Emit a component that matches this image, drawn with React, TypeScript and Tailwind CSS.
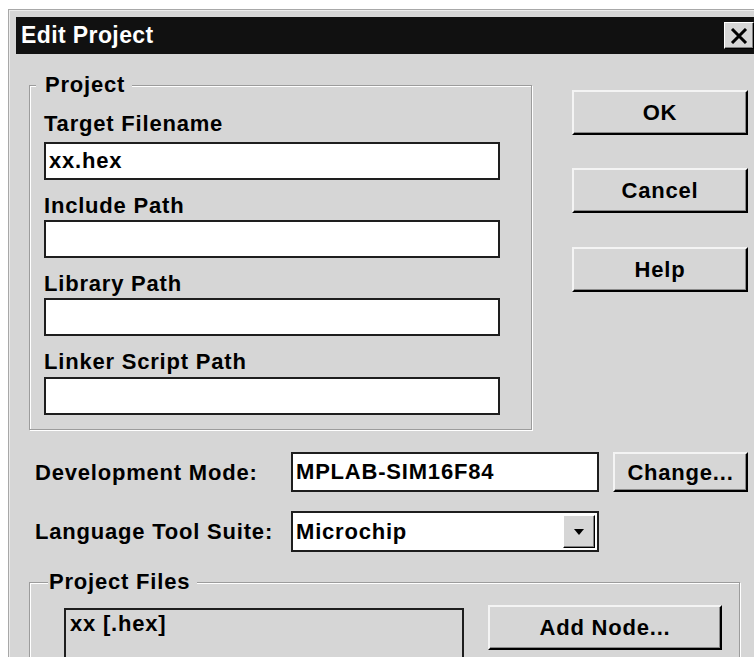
import clsx from 'clsx'

const textCls = 'text-[22px] font-bold tracking-[0.8px] text-black'

// classic raised push button
function PushButton({ label, className }: { label: string; className?: string }) {
  return (
    <button
      className={clsx(
        'flex items-center justify-center bg-[#d6d6d6] border-2 border-t-[#f4f4f4] border-l-[#f4f4f4] border-r-black border-b-black shadow-[inset_-1px_-1px_0_#8a8a8a]',
        textCls,
        className
      )}
    >
      {label}
    </button>
  )
}

function TextBox({ value, className }: { value?: string; className?: string }) {
  return (
    <input
      readOnly
      defaultValue={value ?? ''}
      className={clsx('block h-[38px] bg-white border-2 border-[#1e1e1e] pl-[3px] outline-none', textCls, className)}
    />
  )
}

function FieldLabel({ text, className }: { text: string; className?: string }) {
  return <div className={clsx('h-[24px] leading-[24px]', textCls, className)}>{text}</div>
}

// etched group frame with caption sitting on the top line
function GroupBox({
  title,
  className,
  captionClass,
  children,
}: {
  title: string
  className?: string
  captionClass?: string
  children: React.ReactNode
}) {
  return (
    <div className={clsx('relative border border-[#9c9c9c] shadow-[inset_1px_1px_0_#fff,1px_1px_0_#fff]', className)}>
      <span className={clsx('absolute top-[-13px] bg-[#d6d6d6] h-[24px] leading-[24px]', textCls, captionClass)}>
        {title}
      </span>
      {children}
    </div>
  )
}

export default function App() {
  return (
    <div className="w-[754px] h-[657px] overflow-hidden bg-white font-['Liberation_Sans',Arial,sans-serif]">
      <div className="ml-[8px] mt-[9px] w-[748px] h-[700px] border-t border-l border-[#a8a8a8] bg-[#d6d6d6] shadow-[inset_1px_1px_0_#ececec] pt-[7px] pl-[7px]">
        {/* title bar */}
        <div className="flex items-center h-[37px] bg-[#111] pl-[5px]">
          <span className="text-[23px] font-bold tracking-[0.4px] text-white">Edit Project</span>
          <button className="ml-auto mr-[2px] flex items-center justify-center w-[30px] h-[27px] bg-[#d6d6d6] border border-t-white border-l-white border-r-black border-b-black shadow-[inset_-1px_-1px_0_#808080]">
            <svg width="20" height="16" viewBox="0 0 20 16">
              <path d="M3 1 L17 15 M17 1 L3 15" stroke="#000" strokeWidth="3" />
            </svg>
          </button>
        </div>

        {/* dialog body */}
        <div className="pt-[31px] pl-[13px]">
          <div className="flex">
            <GroupBox title="Project" className="w-[503px] h-[345px]" captionClass="left-[6px] pl-[9px] pr-[7px]">
              <div className="pt-[26px] pl-[14px]">
                <FieldLabel text="Target Filename" />
                <TextBox value="xx.hex" className="mt-[6px] w-[456px]" />
                <FieldLabel text="Include Path" className="mt-[14px]" />
                <TextBox className="mt-[2px] w-[456px]" />
                <FieldLabel text="Library Path" className="mt-[14px]" />
                <TextBox className="mt-[2px] w-[456px]" />
                <FieldLabel text="Linker Script Path" className="mt-[14px]" />
                <TextBox className="mt-[3px] w-[456px]" />
              </div>
            </GroupBox>

            <div className="ml-[40px] mt-[5px] flex flex-col">
              <PushButton label="OK" className="w-[176px] h-[45px]" />
              <PushButton label="Cancel" className="w-[176px] h-[45px] mt-[33px]" />
              <PushButton label="Help" className="w-[176px] h-[45px] mt-[34px]" />
            </div>
          </div>

          <div className="mt-[22px] pl-[6px] flex items-center">
            <div className={clsx('w-[256px]', textCls)}>Development Mode:</div>
            <TextBox value="MPLAB-SIM16F84" className="w-[308px] h-[40px]" />
            <PushButton label="Change..." className="ml-[14px] w-[135px] h-[40px]" />
          </div>

          <div className="mt-[19px] pl-[6px] flex items-center">
            <div className={clsx('w-[256px]', textCls)}>Language Tool Suite:</div>
            <div className="flex items-center w-[308px] h-[41px] bg-white border-2 border-[#1e1e1e] pl-[3px]">
              <span className={textCls}>Microchip</span>
              <div className="ml-auto mr-[2px] flex items-center justify-center w-[32px] h-[33px] bg-[#d6d6d6] border border-t-white border-l-white border-r-black border-b-black shadow-[inset_-1px_-1px_0_#808080]">
                <svg width="10" height="6" viewBox="0 0 10 6">
                  <path d="M0 0 H10 L5 6 Z" fill="#000" />
                </svg>
              </div>
            </div>
          </div>

          <GroupBox
            title="Project Files"
            className="mt-[30px] w-[711px] h-[140px]"
            captionClass="left-[18px] pl-[1px] pr-[7px]"
          >
            <div className="flex items-start pt-[25px] pl-[34px]">
              <div className={clsx('w-[400px] h-[110px] border-2 border-[#1e1e1e] bg-[#d6d6d6] pl-[4px] pt-[1px] leading-[26px]', textCls)}>
                xx [.hex]
              </div>
              <PushButton label="Add Node..." className="ml-[24px] -mt-[3px] w-[234px] h-[45px]" />
            </div>
          </GroupBox>
        </div>
      </div>
    </div>
  )
}
